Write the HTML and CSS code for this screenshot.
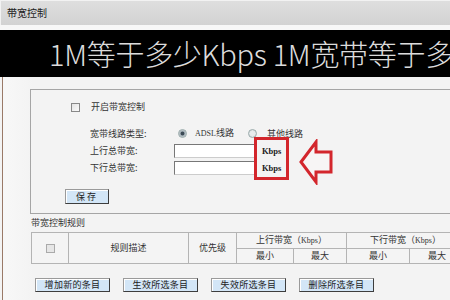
FILE: index.html
```html
<!DOCTYPE html>
<html lang="zh-CN">
<head>
<meta charset="utf-8">
<title>带宽控制</title>
<link rel="stylesheet" href="styles.css">
</head>
<body>
<div class="page">
  <div class="titlebar">带宽控制</div>
  <div class="strip"></div>
  <div class="banner">1M等于多少Kbps 1M宽带等于多少</div>
  <div class="content">
    <div class="panel">
      <div class="row-enable">
        <span class="check"></span>
        <span>开启带宽控制</span>
      </div>
      <div class="form">
        <div class="label">宽带线路类型:</div>
        <div class="ctrl radios">
          <span class="radio on"></span><span class="opt first"><span class="latin">ADSL</span>线路</span>
          <span class="radio"></span><span class="opt">其他线路</span>
        </div>
        <div class="label">上行总带宽:</div>
        <div class="ctrl"><span class="input"></span><span class="unit">Kbps</span></div>
        <div class="label">下行总带宽:</div>
        <div class="ctrl"><span class="input"></span><span class="unit">Kbps</span></div>
      </div>
      <div class="save-row"><span class="btn save">保存</span></div>
    </div>
    <div class="rules-title">带宽控制规则</div>
    <table class="rules">
      <colgroup>
        <col class="c1"><col class="c2"><col class="c3">
        <col class="c4"><col class="c5"><col class="c6"><col class="c7">
      </colgroup>
      <tr class="h1">
        <td rowspan="2"><span class="check dis"></span></td>
        <td rowspan="2">规则描述</td>
        <td rowspan="2">优先级</td>
        <td colspan="2">上行带宽（<span class="latin">Kbps</span>）</td>
        <td colspan="2">下行带宽（<span class="latin">Kbps</span>）</td>
      </tr>
      <tr class="h2">
        <td>最小</td><td>最大</td><td>最小</td><td>最大</td>
      </tr>
    </table>
    <div class="actions">
      <span class="btn">增加新的条目</span>
      <span class="btn">生效所选条目</span>
      <span class="btn">失效所选条目</span>
      <span class="btn">删除所选条目</span>
    </div>
  </div>
  <div class="redbox"></div>
  <svg class="arrow" width="36" height="46" viewBox="0 0 36 46">
    <polygon points="2,23 17,3 17,13 32,13 32,33 17,33 17,43" fill="#f7f5f5" stroke="#d3262c" stroke-width="3" stroke-linejoin="miter"/>
  </svg>
</div>
</body>
</html>
```

FILE: styles.css
```css
* { box-sizing: border-box; }
html, body { margin: 0; padding: 0; }
body {
  width: 450px;
  height: 300px;
  overflow: hidden;
  background: #f4f4f4;
  font-family: "Noto Sans CJK SC", "DejaVu Sans", sans-serif;
  font-size: 9px;
  line-height: 12px;
  color: #333;
}
.page { position: relative; width: 450px; height: 300px; overflow: hidden; }

.titlebar {
  height: 25px;
  line-height: 24px;
  padding-left: 6px;
  background: linear-gradient(#dedede, #d2d2d2);
  border-top: 1px solid #f2f2f2;
  border-left: 1px solid #f2f2f2;
  color: #222;
  font-size: 10px;
}
.strip { height: 5px; background: #f7f7f7; }
.banner {
  height: 47px;
  background: #000;
  color: #dcdcdc;
  font-size: 29px;
  font-weight: 300;
  line-height: 47px;
  padding-left: 49px;
  white-space: nowrap;
  overflow: hidden;
  letter-spacing: -0.3px;
}

.content {
  margin-left: 2px;
  border-left: 1px solid #9a7a68;
  padding: 12px 0 0 27px;
  height: 223px;
  background: linear-gradient(90deg, #f8f8f8, #f3f3f3 30px);
}

.panel {
  width: 460px;
  border: 1px solid #a5a5a5;
  border-right: none;
  padding: 9px 0 9px 0;
}
.row-enable {
  display: flex;
  align-items: center;
  height: 16px;
  padding-left: 40px;
  gap: 11px;
}
.check {
  display: inline-block;
  width: 9px;
  height: 9px;
  border: 1px solid #888;
  background: linear-gradient(135deg, #e4e4e4, #fafafa);
}
.check.dis { border-color: #aaa; background: #e6e6e6; vertical-align: middle; }

.form {
  margin-top: 10px;
  padding-left: 59px;
  display: grid;
  grid-template-columns: 84px auto;
  grid-auto-rows: 17px;
  align-items: center;
}
.label { white-space: nowrap; }
.ctrl { display: flex; align-items: center; }
.radios { padding-left: 4px; }
.radio {
  display: inline-block;
  flex: none;
  width: 9px;
  height: 9px;
  border-radius: 50%;
  border: 1px solid #9aa;
  background: radial-gradient(circle, #e8ecee 40%, #cfd6d8 100%);
}
.radio.on { background: radial-gradient(circle, #3c4a55 30%, #9aa6ae 45%, #e6eaec 90%); }
.opt { margin-left: 10px; white-space: nowrap; }
.opt.first { margin-left: 8px; width: 45px; margin-right: 8px; }
.latin { font-family: "Liberation Serif", serif; font-size: 8px; }
.input {
  display: inline-block;
  width: 81px;
  height: 14px;
  background: #fff;
  border: 1px solid #777;
  border-right-color: #ccc;
  border-bottom-color: #ccc;
}
.unit {
  margin-left: 7px;
  font-family: "Liberation Serif", serif;
  font-size: 8.5px;
  font-weight: bold;
  color: #222;
}

.save-row { margin-top: 13px; padding-left: 34px; display: flex; }
.btn {
  display: inline-flex;
  align-items: center;
  justify-content: center;
  height: 14px;
  background: #d3e6f7;
  border: 1px solid #3d3d3d;
  border-top-color: #9a9a9a;
  border-left-color: #9a9a9a;
  box-shadow: inset 1px 1px 0 #fff;
  font-size: 9px;
  line-height: 12px;
  color: #222;
  letter-spacing: 0.3px;
  white-space: nowrap;
}
.btn.save { width: 44px; height: 15px; letter-spacing: 2px; }

.rules-title { height: 18px; line-height: 18px; padding-left: 1px; }
.rules {
  margin-left: 1px;
  border-collapse: collapse;
  table-layout: fixed;
  width: 433px;
  background: #f4f4f4;
}
.c1 { width: 37px; } .c2 { width: 120px; } .c3 { width: 48px; }
.c4 { width: 57px; } .c5 { width: 53px; } .c6 { width: 63px; } .c7 { width: 55px; }
.rules td {
  border: 1px solid #b4b4b4;
  text-align: center;
  padding: 0;
  color: #333;
  white-space: nowrap;
  overflow: hidden;
  line-height: 12px;
}
.rules .h1 td { height: 16px; }
.rules .h2 td { height: 15px; }

.actions {
  margin-top: 14px;
  padding-left: 5px;
  display: flex;
  gap: 13px;
}
.actions .btn { width: 75px; }

.redbox {
  position: absolute;
  left: 254px;
  top: 137px;
  width: 35px;
  height: 43px;
  border: 3px solid #d3262c;
}
.arrow { position: absolute; left: 299px; top: 139px; }
```
